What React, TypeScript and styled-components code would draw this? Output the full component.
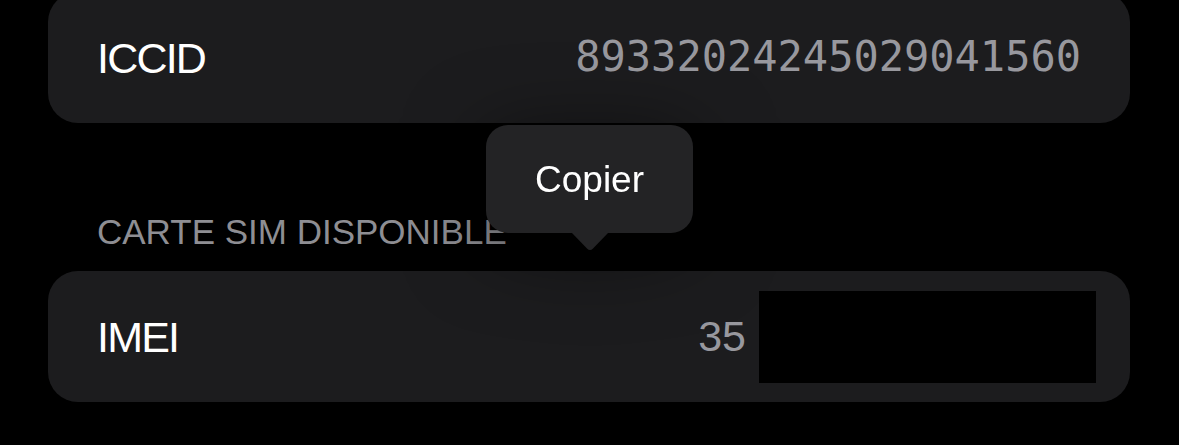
import * as React from 'react';
import styled, { createGlobalStyle } from 'styled-components';

const GlobalStyle = createGlobalStyle`
  html, body {
    margin: 0;
    background: #000;
    font-family: 'Liberation Sans', Arial, sans-serif;
    -webkit-font-smoothing: antialiased;
  }
`;

export const Page = styled.div`
  position: relative;
  width: 1179px;
  height: 445px;
  overflow: hidden;
  padding: 0 49px 0 48px;
  box-sizing: border-box;
`;

export const Card = styled.div<{ $top?: number }>`
  display: flex;
  align-items: center;
  justify-content: space-between;
  height: 131px;
  margin-top: ${(p) => p.$top ?? 0}px;
  padding: 0 49px;
  border-radius: 30px;
  background: #1c1c1e;
  box-sizing: border-box;
`;

export const Label = styled.div`
  color: #fff;
  font-size: 43px;
  letter-spacing: -1.8px;
  padding-top: 2px;
`;

export const Value = styled.div`
  display: flex;
  align-items: center;
  color: #98989e;
  font-size: 43px;
`;

export const MonoValue = styled(Value)`
  font-family: 'DejaVu Sans Mono', 'Liberation Mono', monospace;
  font-size: 42px;
  margin-top: -2px;
`;

export const Redacted = styled.span`
  display: inline-block;
  width: 337px;
  height: 92px;
  margin-left: 13px;
  margin-right: -15px;
  background: #000;
`;

export const SectionHeader = styled.div`
  margin: 88px 0 18px 49px;
  color: #8e8e93;
  font-size: 35px;
  line-height: 42px;
`;

export const Tooltip = styled.div`
  position: absolute;
  left: 486px;
  top: 125px;
  display: flex;
  flex-direction: column;
  align-items: center;
  filter: drop-shadow(0 12px 40px rgba(0, 0, 0, 0.55));
`;

export const Bubble = styled.div`
  display: flex;
  align-items: center;
  justify-content: center;
  width: 207px;
  height: 108px;
  border-radius: 22px;
  background: #232325;
  color: #fff;
  font-size: 37px;
  box-sizing: border-box;
  padding-top: 2px;
`;

export const Arrow = styled.svg`
  display: block;
  margin-top: -1px;
`;

export default function App() {
  return (
    <>
      <GlobalStyle />
      <Page>
        <Card $top={-8}>
          <Label>ICCID</Label>
          <MonoValue>89332024245029041560</MonoValue>
        </Card>
        <SectionHeader>CARTE SIM DISPONIBLE</SectionHeader>
        <Card>
          <Label>IMEI</Label>
          <Value>
            35
            <Redacted />
          </Value>
        </Card>
        <Tooltip>
          <Bubble>Copier</Bubble>
          <Arrow width="38" height="19" viewBox="0 0 38 19">
            <path d="M0 0 H38 L22 16.5 Q19 19.5 16 16.5 Z" fill="#232325" />
          </Arrow>
        </Tooltip>
      </Page>
    </>
  );
}
